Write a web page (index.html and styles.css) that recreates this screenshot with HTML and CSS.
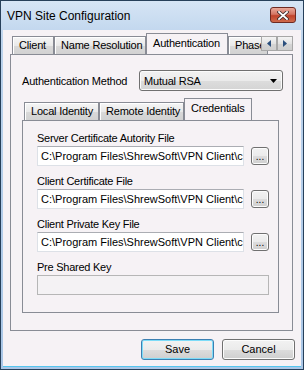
FILE: index.html
```html
<!DOCTYPE html>
<html lang="en">
<head>
<meta charset="UTF-8">
<title>VPN Site Configuration</title>
<link rel="stylesheet" href="styles.css">
</head>
<body>
<div class="window">
    <div class="titlebar">
        <span class="title">VPN Site Configuration</span>
        <div class="close-btn">
            <svg width="12" height="9" viewBox="0 0 12 9">
                <path d="M2 1 L10 8 M10 1 L2 8" stroke="#3a2a2a" stroke-width="3.4" stroke-linecap="square"/>
                <path d="M2 1 L10 8 M10 1 L2 8" stroke="#ffffff" stroke-width="1.8" stroke-linecap="square"/>
            </svg>
        </div>
    </div>
    <div class="client">
        <div class="tabs outer">
            <div class="tabstrip">
                <div class="tab t-client">Client</div>
                <div class="tab t-name">Name Resolution</div>
                <div class="tab active t-auth">Authentication</div>
                <div class="tab t-phase">Phase</div>
                <div class="scroller">
                    <div class="scroll-btn">
                        <svg width="4" height="7" viewBox="0 0 4 7"><path d="M4 0 L0 3.5 L4 7 Z" fill="#2b4f7d"/></svg>
                    </div>
                    <div class="scroll-btn">
                        <svg width="4" height="7" viewBox="0 0 4 7"><path d="M0 0 L4 3.5 L0 7 Z" fill="#2b4f7d"/></svg>
                    </div>
                </div>
            </div>
            <div class="panel outer-panel">
                <div class="method-row">
                    <span class="method-label">Authentication Method</span>
                    <div class="combo">
                        <span>Mutual RSA</span>
                        <svg width="7" height="4" viewBox="0 0 7 4"><path d="M0 0 L7 0 L3.5 4 Z" fill="#000"/></svg>
                    </div>
                </div>
                <div class="tabs inner">
                    <div class="tabstrip inner-strip">
                        <div class="tab t-local">Local Identity</div>
                        <div class="tab t-remote">Remote Identity</div>
                        <div class="tab active t-cred">Credentials</div>
                    </div>
                    <div class="panel inner-panel">
                        <div class="field-group">
                            <label>Server Certificate Autority File</label>
                            <div class="file-row">
                                <div class="textbox">C:\Program Files\ShrewSoft\VPN Client\c</div>
                                <div class="browse">...</div>
                            </div>
                        </div>
                        <div class="field-group">
                            <label>Client Certificate File</label>
                            <div class="file-row">
                                <div class="textbox">C:\Program Files\ShrewSoft\VPN Client\c</div>
                                <div class="browse">...</div>
                            </div>
                        </div>
                        <div class="field-group">
                            <label>Client Private Key File</label>
                            <div class="file-row">
                                <div class="textbox">C:\Program Files\ShrewSoft\VPN Client\c</div>
                                <div class="browse">...</div>
                            </div>
                        </div>
                        <div class="field-group">
                            <label>Pre Shared Key</label>
                            <div class="textbox disabled"></div>
                        </div>
                    </div>
                </div>
            </div>
        </div>
        <div class="buttons">
            <div class="btn default">Save</div>
            <div class="btn">Cancel</div>
        </div>
    </div>
</div>
</body>
</html>
```

FILE: styles.css
```css
body {
    margin: 0;
    font-family: "Liberation Sans", Arial, sans-serif;
    font-size: 11px;
    color: #000;
}
.window {
    width: 304px;
    height: 370px;
    box-sizing: border-box;
    border: 1px solid #27405a;
    background: linear-gradient(#d6e5f5, #bcd3ec 40px, #a9c6e6);
    display: flex;
    flex-direction: column;
}
.titlebar {
    height: 29px;
    display: flex;
    align-items: center;
    justify-content: space-between;
    padding: 0 7px 0 6px;
    flex-shrink: 0;
}
.title {
    font-size: 12px;
    margin-top: 1px;
}
.close-btn {
    width: 24px;
    height: 14px;
    margin-top: -1px;
    border: 1px solid #6e2a22;
    border-radius: 3px;
    background: linear-gradient(#e9a99a, #d47563 45%, #c0432b 55%, #cf6a4c);
    display: flex;
    align-items: center;
    justify-content: center;
}
.client {
    flex: 1;
    margin: 0 2px 2px;
    background: #f6f2f5;
    padding: 3px 8px 0 7px;
    border-bottom: 1px solid #55c6ef;
}
.tabstrip {
    display: flex;
    align-items: flex-end;
    height: 21px;
    padding-left: 2px;
    position: relative;
    overflow: hidden;
    letter-spacing: -0.2px;
}
.tab {
    box-sizing: border-box;
    height: 18px;
    border: 1px solid #898c95;
    border-bottom: none;
    background: linear-gradient(#f6f6f6, #e9e9e9 50%, #d9d9d9 51%, #d2d2d2);
    box-shadow: inset 1px 1px 0 #fff;
    padding: 2px 0 0 6px;
    white-space: nowrap;
    overflow: hidden;
    flex-shrink: 0;
}
.tab.active {
    height: 22px;
    margin-bottom: -1px;
    background: #f6f2f5;
    box-shadow: none;
    padding-top: 3px;
    position: relative;
    z-index: 1;
}
.t-client { width: 42px; }
.t-name { width: 92px; }
.t-auth { width: 82px; height: 22px; }
.t-phase { width: 40px; }
.scroller {
    position: absolute;
    right: 0;
    top: 3px;
    display: flex;
    background: #f6f2f5;
}
.scroll-btn {
    box-sizing: border-box;
    width: 16px;
    height: 15px;
    border: 1px solid #a7a7a7;
    background: linear-gradient(#f4f4f4, #e2e2e2 50%, #d5d5d5 51%, #cfcfcf);
    display: flex;
    align-items: center;
    justify-content: center;
}
.panel {
    box-sizing: border-box;
    border: 1px solid #898c95;
    background: #f6f2f5;
}
.outer-panel {
    height: 277px;
    padding: 15px 9px 0 11px;
}
.method-row {
    display: flex;
    align-items: center;
    justify-content: space-between;
    letter-spacing: -0.2px;
}
.combo {
    box-sizing: border-box;
    width: 144px;
    height: 21px;
    border: 1px solid #707070;
    border-radius: 3px;
    background: linear-gradient(#f2f2f2, #ebebeb 50%, #dddddd 51%, #d4d4d4);
    box-shadow: inset 0 0 0 1px #fbfbfb;
    display: flex;
    align-items: center;
    justify-content: space-between;
    padding: 0 5px 0 4px;
}
.tabs.inner {
    margin-top: 7px;
    width: 257px;
}
.inner-strip {
    height: 22px;
}
.inner-strip .tab.active {
    height: 23px;
}
.t-local { width: 75px; }
.t-remote { width: 85px; }
.t-cred { width: 68px; }
.inner-panel {
    height: 193px;
    padding: 10px 0 0 14px;
    display: flex;
    flex-direction: column;
    gap: 8px;
}
.field-group label {
    display: block;
    line-height: 14px;
    margin-bottom: 1px;
    letter-spacing: -0.25px;
}
.file-row {
    display: flex;
    align-items: center;
    gap: 7px;
}
.textbox {
    box-sizing: border-box;
    width: 207px;
    height: 20px;
    border: 1px solid #dde1e7;
    border-top-color: #abadb3;
    background: #fff;
    padding: 3px 0 0 3px;
    white-space: nowrap;
    overflow: hidden;
}
.textbox.disabled {
    width: 232px;
    background: #f4f2f4;
    border-color: #b6b6b6;
}
.browse {
    box-sizing: border-box;
    width: 18px;
    height: 18px;
    border: 1px solid #707070;
    border-radius: 3px;
    background: linear-gradient(#f2f2f2, #ebebeb 50%, #dddddd 51%, #cfcfcf);
    box-shadow: inset 0 0 0 1px #fcfcfc;
    text-align: center;
    line-height: 18px;
    font-size: 10px;
}
.buttons {
    display: flex;
    justify-content: flex-end;
    gap: 8px;
    margin-top: 8px;
    margin-right: -2px;
}
.btn {
    box-sizing: border-box;
    width: 73px;
    height: 21px;
    border: 1px solid #707070;
    border-radius: 3px;
    background: linear-gradient(#f2f2f2, #ebebeb 50%, #dddddd 51%, #cfcfcf);
    box-shadow: inset 0 0 0 1px #fcfcfc;
    text-align: center;
    line-height: 19px;
}
.btn.default {
    border-color: #3c7fb1;
    box-shadow: inset 0 0 0 1px #7ddcf8;
}
```
